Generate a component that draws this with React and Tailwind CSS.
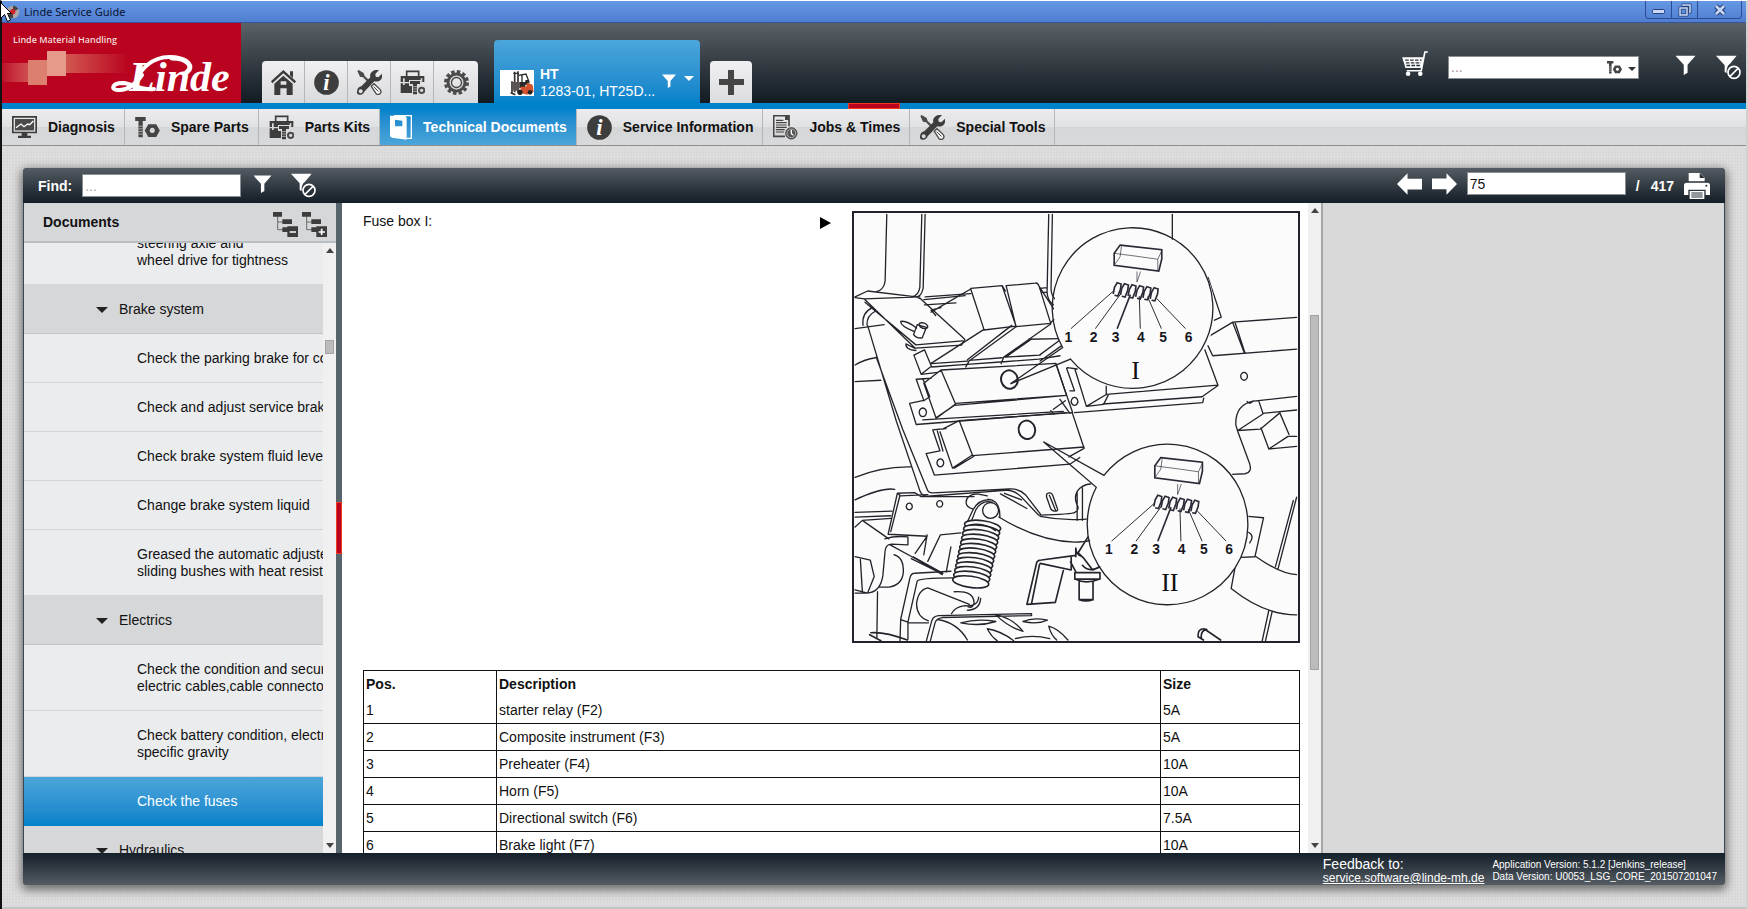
import React, { useState } from 'react'

const HomeIcon = () => (
  <svg viewBox="0 0 75 75" className="size-[25px]" fill="#3b3b3b" aria-hidden="true">
    <path d="M0 34 37 0l38 34-4 6L37 10 4 40z" />
    <path d="M57 4h9v20l-9-8z" />
    <path fillRule="evenodd" d="M10 41 37 17l28 24v34H47V55H28v20H10zM29 34v10h17V34z" />
  </svg>
)

const InfoIcon = () => (
  <svg viewBox="0 0 75 75" className="size-[25px]" aria-hidden="true">
    <circle cx="37.5" cy="37.5" r="37" fill="#3d3d3d" />
    <text x="37" y="59" textAnchor="middle" fontFamily="Liberation Serif, serif" fontStyle="italic" fontWeight="bold" fontSize="68" fill="#fff">i</text>
  </svg>
)

const ToolsIcon = () => (
  <svg viewBox="0 0 75 75" className="size-[25px]" aria-hidden="true">
    <path fill="#4a4a4a" d="M1 3 5 0l15 9 3 9 20 19-5 5-20-20-9-2z" />
    <path fill="#f1f1f1" stroke="#4a4a4a" strokeWidth="4" d="m43 49 8-8 18 17q6 8 0 13t-12 0z" />
    <path stroke="#4a4a4a" strokeWidth="3" d="m50 50 14 14" />
    <path fill="#3d3d3d" fillRule="evenodd" d="M66 0 55 12l1 8 8 2L75 11q3 14-7 21-8 4-16 2L23 64q-5 12-16 10T1 60q2-9 12-11l27-27q-3-10 5-17 9-7 21-5M11 58a6 6 0 1 0 .1 0" />
  </svg>
)

const ToolboxIcon = () => (
  <svg viewBox="0 0 75 75" className="size-[25px]" aria-hidden="true">
    <path fill="none" stroke="#3d3d3d" strokeWidth="5" d="M20 18V4h36v14" />
    <path fill="#3d3d3d" d="M2 18h71v18H2zM2 40h34v29H2z" />
    <path fill="#dcdcde" d="M9 25h5v20H9zM62 25h5v10h-5zM27 30h36v18H27z" />
    <path fill="#3d3d3d" d="M30 33h30v9H51v31H39V42h-9z" />
    <path stroke="#dcdcde" strokeWidth="2" d="M39 50h12M39 57h12M39 64h12" />
    <path fill="#dcdcde" d="M53 46h22v29H53z" />
    <circle cx="65" cy="61" r="8" fill="none" stroke="#4a4a4a" strokeWidth="6" />
  </svg>
)

const GearIcon = () => (
  <svg viewBox="0 0 75 75" className="size-[25px]" aria-hidden="true">
    <circle cx="37.5" cy="37.5" r="33" fill="none" stroke="#4a4a4a" strokeWidth="9" strokeDasharray="10.4 6.88" />
    <circle cx="37.5" cy="37.5" r="25" fill="none" stroke="#4a4a4a" strokeWidth="10" />
    <circle cx="37.5" cy="37.5" r="19" fill="none" stroke="#cfcfd1" strokeWidth="4" />
    <circle cx="37.5" cy="37.5" r="15" fill="none" stroke="#4a4a4a" strokeWidth="4" />
  </svg>
)

const MonitorIcon = () => (
  <svg viewBox="0 0 75 66" className="h-[22px] w-[25px]" aria-hidden="true">
    <path fill="#3d3d3d" fillRule="evenodd" d="M0 0h75v52H46v7h11v7H18v-7h11v-7H0zM5 5v42h65V5z" />
    <path fill="#4a4a4a" d="M9 9h57v34H9z" />
    <path fill="none" stroke="#fff" strokeWidth="4" d="m12 35 15-11 9 8 11-8 6 2 11-11" />
  </svg>
)

const BoltNutIcon = ({ className = 'h-[21px] w-[25px]' }) => (
  <svg viewBox="0 0 75 64" className={className} aria-hidden="true">
    <path fill="#444" d="M0 0h32v12H23v50H10V12H0z" />
    <path stroke="#ddd" strokeWidth="2" d="M10 28h13M10 36h13M10 44h13M10 52h13" />
    <path fill="#444" fillRule="evenodd" d="M40 22h24l11 19-11 20H40L29 41zm12 11a8 8 0 1 0 .1 0" />
  </svg>
)

const BookIcon = () => (
  <svg viewBox="0 0 66 75" className="h-[25px] w-[22px]" aria-hidden="true">
    <path fill="#fff" fillRule="evenodd" d="M0 2h44q6 2 6 8v64L6 68q-6-2-6-8zm15 12v20h22V17z" />
    <path fill="none" stroke="#fff" strokeWidth="4" d="M12 2h52v68H50" />
  </svg>
)

const JobsIcon = () => (
  <svg viewBox="0 0 75 75" className="size-[25px]" aria-hidden="true">
    <path fill="none" stroke="#444" strokeWidth="5" d="M48 34V2H2v62h34" />
    <path fill="#444" d="M36 2h12v13H36z" />
    <path stroke="#444" strokeWidth="3.5" d="M9 16h22M9 23h32M9 30h32M9 37h32M9 44h26M9 51h24" />
    <circle cx="55" cy="55" r="20" fill="#dcdcde" />
    <circle cx="55" cy="55" r="17" fill="#555" stroke="#444" strokeWidth="3" />
    <circle cx="55" cy="55" r="13" fill="none" stroke="#ddd" strokeWidth="2" />
    <path fill="none" stroke="#fff" strokeWidth="4" d="M55 45v11l6 5" />
  </svg>
)

const FunnelIcon = ({ className = 'h-[21px] w-[21px]' }) => (
  <svg viewBox="0 0 63 63" className={className} fill="#fff" aria-hidden="true">
    <path d="M0 2h63L38 31v25l-12 7V31z" />
  </svg>
)

const FunnelOffIcon = () => (
  <svg viewBox="0 0 75 75" className="size-[25px]" aria-hidden="true">
    <path fill="#fff" d="M0 2h62L42 26q-12 8-10 28L26 51V31z" />
    <circle cx="54" cy="52" r="18" fill="none" stroke="#fff" strokeWidth="5" />
    <path stroke="#fff" strokeWidth="5" d="m42 64 24-24" />
  </svg>
)

const CartIcon = () => (
  <svg viewBox="0 0 78 76" className="h-[25px] w-[26px]" aria-hidden="true">
    <path fill="none" stroke="#fff" strokeWidth="5" d="M78 3h-9L58 60H14" />
    <path fill="#fff" d="M0 19h66l-6 33H10z" />
    <path stroke="#27313a" strokeWidth="4" d="M9 28h50M11 36h46M13 44h42" strokeDasharray="11 4" />
    <circle cx="18" cy="69" r="7" fill="#fff" />
    <circle cx="55" cy="69" r="7" fill="#fff" />
  </svg>
)

const ArrowIcon = ({ flip }) => (
  <svg viewBox="0 0 76 66" className={`h-[22px] w-[25px] ${flip ? 'rotate-180' : ''}`} aria-hidden="true">
    <path fill="#fff" d="M0 33 32 0v17h44v33H32v16z" />
  </svg>
)

const PrinterIcon = () => (
  <svg viewBox="0 0 78 78" className="size-[26px]" aria-hidden="true">
    <path fill="#fff" d="M14 0h34l14 14v18H14z" />
    <path fill="#27313a" d="M47 0v15h15z" />
    <path fill="#27313a" d="M8 25h62v6H8z" />
    <path fill="#fff" d="M8 29h62q8 0 8 8v29H65V50H13v16H0V37q0-8 8-8" />
    <circle cx="67" cy="38" r="3" fill="#27313a" />
    <path fill="#fff" d="M17 54h44v24H17z" />
    <path stroke="#27313a" strokeWidth="3" d="M22 60h34M22 66h34M22 72h34" />
  </svg>
)

const TreeIcon = ({ plus }) => (
  <svg viewBox="0 0 75 75" className="size-[25px]" aria-hidden="true">
    <path fill="none" stroke="#6a6a6a" strokeWidth="3" d="M14 12v41h16M14 30h18" />
    <path fill="#3d3d3d" d="M0 0h27v14H0zM28 22h29v14H28zM28 46h16v14H28zM43 43h32v32H43z" />
    <path stroke="#fff" strokeWidth="5" d="M50 60h19" />
    {plus && <path stroke="#fff" strokeWidth="5" d="M59 50v19" />}
  </svg>
)

const Caret = ({ className = 'h-[6px] w-[12px] fill-[#222]', up }) => (
  <svg viewBox="0 0 12 6" className={className} preserveAspectRatio="none" aria-hidden="true">
    <path d={up ? 'M0 6 6 0l6 6z' : 'M0 0h12L6 6z'} />
  </svg>
)

const Forklift = () => (
  <svg viewBox="0 0 102 78" className="h-[26px] w-[34px] shrink-0 bg-white" aria-hidden="true">
    <path fill="none" stroke="#33302f" strokeWidth="5" d="M44 5v62M54 4v62M36 34v38M32 68l14 6" />
    <path fill="#5a5552" d="M36 36h22v26H36z" />
    <path fill="none" stroke="#2b2b2b" strokeWidth="4" d="M40 10h16M56 16l22-4 10 26M66 14v24" />
    <path fill="#2a2828" d="M58 36h18v18H58zM76 30h10v14H76z" />
    <path fill="#d4532f" d="M62 50h16l4-12 16 6 3 22-20 8-20-6z" />
    <circle cx="60" cy="67" r="8" fill="#222" />
    <circle cx="90" cy="67" r="7" fill="#222" />
  </svg>
)

const Logo = () => (
  <svg viewBox="0 0 239 80" className="h-20 w-[239px] shrink-0 bg-[#b9031f]" role="img" aria-label="Linde Material Handling">
    <defs>
      <linearGradient id="beamL"><stop stopColor="#e08d7e" stopOpacity=".1" /><stop offset="1" stopColor="#d9705f" /></linearGradient>
      <linearGradient id="beamR"><stop stopColor="#d9705f" /><stop offset="1" stopColor="#b9031f" /></linearGradient>
    </defs>
    <path fill="url(#beamL)" d="M0 40h45v19H0z" />
    <path fill="url(#beamR)" d="M45 31h82v19H45z" />
    <path fill="#dd7f6e" d="M26 37h19v25H26z" />
    <path fill="#e59a8a" d="M45 28h19v25H45z" />
    <text x="11" y="20" fontFamily="Open Sans, sans-serif" fontSize="9" fontWeight="600" fill="#f6dcd8">Linde Material Handling</text>
    <text y="68" fontFamily="Liberation Serif, serif" fontStyle="italic" fontWeight="bold" fill="#fff" fontSize="42">
      <tspan x="127">L</tspan><tspan x="153">inde</tspan>
    </text>
    <g fill="none" stroke="#fff" strokeLinecap="round">
      <path strokeWidth="4" d="M152 66c-12 2-20-5-31-6-12 0-13 8-3 7 10 0 17-8 22-15" />
      <path strokeWidth="4" d="M138 50c10-14 24-18 38-15" />
      <path strokeWidth="5" d="M170 35c16 0 22 9 15 14" />
    </g>
  </svg>
)

const FUSE_LABELS = ['1', '2', '3', '4', '5', '6']
const FUSE_LABEL_X = [-200, -123, -57, 20, 87, 164]

// fuse lens, drawn around its own centre; shift moves the contents sideways
const FuseLens = ({ cx, cy, shift = 0, numeral }) => (
  <g transform={`translate(${cx} ${cy})`}>
    <circle r="243" fill="#fbfbfb" />
    <g transform={`translate(${shift} 0)`}>
      <g fill="none" stroke="#2a2a36">
        <path strokeWidth="5" d="m-43-198 126 14v28l-9 37-135-18v-36z" />
        <path strokeWidth="2" d="M-61-173 8-164l63 9 12-26M-61-137l18-26 4-30M71-155v35M8-118 8-86M19-118 8-86" />
        {[-60, -38, -15, 8, 30, 52].map((x, i) => (
          <path key={x} strokeWidth="5" d={`M${x - 4} ${-50 + i * 3}l4-20 8-14 12 4-2 16-8 20-10-2`} />
        ))}
        <path strokeWidth="3" d="M-62-60-192 55M-43-48-118 55M15-44 18 55M40-42 82 55M68-36 155 55" />
        <path strokeWidth="5" d="M-12-48-52 55" />
      </g>
      <g fontFamily="Liberation Sans, Arial, sans-serif" fontWeight="bold" fontSize="42" fill="#16161c" textAnchor="middle">
        {FUSE_LABELS.map((n, i) => <text key={n} x={FUSE_LABEL_X[i]} y="94">{n}</text>)}
      </g>
    </g>
    <text x="4" y="206" textAnchor="middle" fontFamily="Liberation Serif, serif" fontSize="78" fill="#111">{numeral}</text>
  </g>
)

const Diagram = () => (
  <svg viewBox="37 30 1343 1295" className="h-[432px] w-[448px] shrink-0 border-2 border-[#22222e] bg-[#fbfbfb]" role="img" aria-label="Fuse boxes I and II">
    <g fill="none" stroke="#23232b" strokeWidth="4" strokeLinejoin="round" strokeLinecap="round">
      {/* pillars */}
      <path d="M136 34l-5 201q-3 27-26 33M242 34l-6 221q-4 25-24 29M252 34l-6 224q-6 24-19 26M626 34l-5 236q1 25 19 38M637 34l-4 226q1 20 12 30M1000 34v78M600 258l20-2M605 270h16M248 292l125-12M250 308l95-6M252 284l138-10" />
      {/* slotted bracket */}
      <path d="M40 284l38-18 147 18 14 6 133 122-10 18-140 9L68 290l-28-4M68 290l168-6M70 300l154 129 141-12M222 440l-28-14q-2 18 30 20M218 388q-40-16-40-30 18-4 48 20" />
      <path d="M228 368l-11 30q8 12 26 10l13-32zM242 362a14 8 20 1 0 .1 0M64 370q-4-38 26-52M76 368q0-28 24-40M40 380l88-12M40 490q30-18 62-22M40 540l78-4" />
      {/* relay blocks */}
      <path d="M270 330l120-70 40 122-160 103M390 258l95-8 42 122-97 12M485 250l10 16M497 250l88-8q8-2 12 10l35 112-105 10zM597 252l44 68M632 362l10-10M284 340l-14-16 30-8" />
      <path d="M527 374 385 478l-10 18M514 370 380 474M632 366 490 466l-8 20M565 412l95-2M570 414l-74 52 104-6M598 460l60-44M600 478l64-46M250 444l22 52 105-8M218 460l32-16M218 460l22 58 28-22M240 518l50-6M270 486l110-8M385 476l100-8M378 488l112-8M490 466l108-6M492 480l104-8M596 472l64-10" />
      {/* base plate */}
      <path d="M78 370 165 660l72 213q6 14 22 14l236-18q26-2 48 20l52 55q104-3 110-8 16-10 6-24-12-30 10-50 16-12 32-12M104 466l80 218 74 182q4 12 18 11l230-12q30-2 50 18l45 58M728 862v98M712 872v88" />
      <path d="M620 880q12-8 18 4l14 40q4 8-8 8-10 0-13-10l-12-34zM628 884l18 44" />
      {/* fuse box I */}
      <path d="M248 545l52-40 348-20 32 97-340 30-55 38zM300 505l44 103-54 40M344 606l334-24M270 530l-45 3 23 64-43 9 20 64 455-36M246 534l20 52-18 12M245 656l425-26M632 628l10 10M640 624l36-26" />
      <ellipse cx="507" cy="534" rx="25" ry="28" strokeWidth="6" transform="rotate(-15 507 534)" />
      <path d="M245 620a11 13 0 1 0 .1 0" />
      {/* centre fuse box */}
      <path d="M648 488l50 145M680 500l24 68h-14M682 498l30 4M706 505l34 110 60-36 338-28-40-108M740 615l52-6 14-28M790 608l300-22 48-34M1095 590l-3 14-388 30M704 588a10 12 0 1 0 .1 0M660 594l30 42M800 552v28" />
      {/* fuse box II */}
      <path d="M305 684l50-26 342-24 36 108-46 26M355 658l40 104-60 40-38-110M395 764l338-26M340 802l60-36M315 682l-40 4 22 64-42 8 25 65 410-33 30-20M288 686l18 64M298 774a10 12 0 1 0 .1 0" />
      <ellipse cx="560" cy="686" rx="25" ry="28" strokeWidth="6" transform="rotate(-15 560 686)" />
      {/* right side */}
      <path d="M1108 225l40 120-22 10M1108 405l75-45 193-14M1183 362l35 92M1190 362l30 92M1108 432l14 30 254-20" />
      <path d="M1217 512a10 12 0 1 0 .1 0M1376 585l-130 14q-56 10-54 72l6 20 36 98q8 26-14 30l-40 2M1226 600q10 12 18-2M1262 600l12 36 102-10M1274 638l-76 50M1198 688l68-4 60-50M1268 680l24 64 58-38 26 0M1292 744l84-8M1325 634l28 66" />
      {/* hoses and rail */}
      <path d="M40 830q80-34 170-32M40 898q80-38 120-32M40 936l112-4M40 950l108-4M480 880l80 44M492 878l52 20" />
      <path d="M168 878l-28 124 118 6-36 52M168 878l52-2 20 12 160 0M176 884l-28 110M168 878l10 8 82-4M204 908a9 10 0 1 0 .1 0M296 900a9 10 0 1 0 .1 0M298 1004l62-6M298 1004l-38 80M258 1004l-10 60" />
      {/* spring */}
      <path d="M410 880q-34 2-34 26 0 14 22 20M410 880l30 6M455 905q-32-8-50 24l-14 36M452 898q-40-4-58 36l-14 30M478 950q2-50-36-54" />
      <circle cx="450" cy="930" r="24" />
      {[0, 1, 2, 3, 4, 5, 6, 7, 8, 9, 10, 11, 12].map((i) => (
        <ellipse key={i} cx={426 - i * 3} cy={978 + i * 14} rx="55" ry="17" fill="#fbfbfb" strokeWidth="5" transform={`rotate(8 ${426 - i * 3} ${978 + i * 14})`} />
      ))}
      <path d="M475 950q120 74 230 76 30 0 50-6M600 948q70 14 140 8M385 975q40-12 80 16" />
      {/* left linkage */}
      <path d="M40 980l22-20 80 56M62 960l86-6M130 1016q30-10 70-6v24l-50-2q-20 0-20 30l-6 66q-8 50-48 52l-36 0M146 1034l84 46 74 44M158 1064q30 8 28 54-4 38-44 44l-28 0M108 1176l-2 140M40 1070l46 10 12 50-20 50-38-10M56 1078l6 96M216 1070l90 50M210 1076l94 46M330 1040l-14 76" />
      <path d="M206 1134q4-14 14-14l110-6M206 1134l-28 126 22 8 28-124q4-10 110-10M178 1262l-2 62M200 1270l62 0M200 1270v50M262 1264q-34-10-36-50 4-44 34-50l126 50M340 1176q60-4 60 34-2 16-18 12M414 1192q-2 30-42 26-30 4-40 24M420 1196q-2 34-40 36" />
      {/* tread plate */}
      <path d="M256 1324l16-60q4-14 20-16l282-6v6l-270 6q-18 2-22 16l-14 54M290 1260q60 10 90 62M360 1270q50-14 106-4-50 16-106 4M466 1246q52 10 82 50-46-14-82-50M548 1266q30-14 74-4-30 14-74 4M440 1288q40 6 80 36M626 1280q30 8 58 42M626 1280q6 26 24 42M525 1318q50-14 104 0M440 1288q14 26 30 36" />
      {/* clamp */}
      <path d="M590 1086q4-6 14-6l104-14M590 1086l-30 128 86-6 24-96M598 1094l-24 118M600 1090l94 20v-38M708 1044q0 20 20 26M708 1044v26M745 1010l-30 48 18 18 26 34 20-8M705 1118h76v20h-76zM708 1138q30 16 70 0M718 1146v54h42v-54M718 1200q20 8 42 0M692 1086l16 30M728 1096q20 24 52 4" strokeWidth="5" />
      <path d="M1230 948l46 4-26 118-42 2M1230 996q20 10 4 32M1250 1068q80 56 126 56M1376 890l-56 216M1366 900l-54 200M1192 1090l-14 76q100 80 198 80M1292 1232l-20 92M1302 1236l-20 88" />
      <path d="M1096 1288q-20 0-18 24l16 10M1104 1290q-20 4-16 28M1096 1288l50 34M88 1300q40-4 110 22M84 1306l34 18" strokeWidth="5" />
    </g>
    <FuseLens cx={885} cy={325} numeral="I" />
    <FuseLens cx={988} cy={968} shift={20} numeral="II" />
    <g fill="none" stroke="#23232b" strokeWidth="4">
      <path d="M668 437A243 243 0 1 1 692 472L510 547z" />
      <path d="M793 824A243 243 0 1 1 770 860L610 722z" />
    </g>
  </svg>
)

const APP_TABS = [
  { label: 'Home', icon: <HomeIcon /> },
  { label: 'Information', icon: <InfoIcon /> },
  { label: 'Tools', icon: <ToolsIcon /> },
  { label: 'Toolbox', icon: <ToolboxIcon /> },
  { label: 'Settings', icon: <GearIcon /> },
]

const NAV = [
  { label: 'Diagnosis', icon: <MonitorIcon /> },
  { label: 'Spare Parts', icon: <BoltNutIcon /> },
  { label: 'Parts Kits', icon: <ToolboxIcon /> },
  { label: 'Technical Documents', icon: <BookIcon /> },
  { label: 'Service Information', icon: <InfoIcon /> },
  { label: 'Jobs & Times', icon: <JobsIcon /> },
  { label: 'Special Tools', icon: <ToolsIcon /> },
]

const DOCS = [
  { lines: ['steering axle and', 'wheel drive for tightness'] },
  { group: 'Brake system' },
  { lines: ['Check the parking brake for correct operation'] },
  { lines: ['Check and adjust service brake'] },
  { lines: ['Check brake system fluid level'] },
  { lines: ['Change brake system liquid'] },
  { lines: ['Greased the automatic adjuster and', 'sliding bushes with heat resistant'] },
  { group: 'Electrics' },
  { lines: ['Check the condition and secure', 'electric cables,cable connectors'] },
  { lines: ['Check battery condition, electrolyte', 'specific gravity'] },
  { lines: ['Check the fuses'] },
  { group: 'Hydraulics' },
]

const FUSES = [
  ['1', 'starter relay (F2)', '5A'],
  ['2', 'Composite instrument (F3)', '5A'],
  ['3', 'Preheater (F4)', '10A'],
  ['4', 'Horn (F5)', '10A'],
  ['5', 'Directional switch (F6)', '7.5A'],
  ['6', 'Brake light (F7)', '10A'],
]

const TitleBar = () => (
  <div className="flex h-[22px] shrink-0 items-center border-b border-[#36549a] bg-gradient-to-b from-[#6698e4] to-[#4f7dd0] pl-1">
    <svg viewBox="0 0 42 42" className="size-3.5" aria-hidden="true">
      <circle cx="21" cy="21" r="19" fill="#a9a9a9" />
      <path fill="#444" d="M21 2a19 19 0 0 1 16 10L21 21zM21 40A19 19 0 0 1 5 30l16-9z" />
      <circle cx="20" cy="20" r="8" fill="#d0202a" />
    </svg>
    <span className="ml-1 font-['Noto_Sans',sans-serif] text-[11px] leading-4 text-[#0a1430]">Linde Service Guide</span>
    <div className="mr-1 ml-auto flex h-[18px] self-start rounded-b-sm border border-t-0 border-[#2c4c94]">
      <button aria-label="Minimize" className="grid w-[26px] place-items-center border-r border-[#2c4c94] pt-1">
        <svg viewBox="0 0 13 5" className="h-[5px] w-[13px]"><rect x=".5" y=".5" width="12" height="4" rx="1" fill="#c9d8f4" stroke="#27407c" /></svg>
      </button>
      <button aria-label="Restore" className="grid w-[26px] place-items-center border-r border-[#2c4c94]">
        <svg viewBox="0 0 14 14" className="size-3.5" fill="none">
          <path stroke="#27407c" strokeWidth="3" d="M5 4V2h7v7h-2M2 5h7v7H2z" />
          <path stroke="#c9d8f4" strokeWidth="1.5" d="M5 3V2h7v7h-1M2 5h7v7H2z" />
        </svg>
      </button>
      <button aria-label="Close" className="grid w-[43px] place-items-center">
        <svg viewBox="0 0 12 12" className="size-3" fill="none">
          <path stroke="#27407c" strokeWidth="5" d="m2 2 8 8m0-8-8 8" />
          <path stroke="#c9d8f4" strokeWidth="2.5" d="m2 2 8 8m0-8-8 8" />
        </svg>
      </button>
    </div>
  </div>
)

const Header = () => (
  <header className="flex h-20 shrink-0 items-end bg-gradient-to-b from-[#5a6167] to-[#131b22]">
    <Logo />
    <div className="ml-[21px] flex h-[42px] overflow-hidden rounded-t-sm">
      {APP_TABS.map(({ label, icon }) => (
        <button key={label} aria-label={label} className="grid w-[43px] place-items-center border-r border-[#b4b6b9] bg-gradient-to-b from-[#f0f0f2] to-[#d9dadc] last:w-11 last:border-r-0">
          {icon}
        </button>
      ))}
    </div>
    <button className="ml-4 flex h-[63px] w-[206px] items-end rounded-t-sm bg-gradient-to-b from-[#4ba6da] to-[#0082ca] px-1.5 pb-[7px] text-left text-sm text-white">
      <Forklift />
      <span className="-mb-1 ml-1.5 flex-1 leading-[17px] whitespace-nowrap">
        <b className="block">HT</b>
        1283-01, HT25D...
      </span>
      <span className="flex gap-2 pb-2">
        <FunnelIcon className="size-3.5" />
        <Caret className="mt-0.5 h-[5px] w-[10px] fill-white" />
      </span>
    </button>
    <button aria-label="Add tab" className="ml-2.5 grid h-[42px] w-[42px] place-items-center rounded-t-sm bg-gradient-to-b from-[#f0f0f2] to-[#dcdddf]">
      <svg viewBox="0 0 25 25" className="size-[25px]"><path fill="#464646" d="M9 0h6v9h10v6H15v10H9V15H0V9h9z" /></svg>
    </button>
    <div className="mr-[5px] ml-auto flex items-center gap-5 self-center pt-2">
      <button aria-label="Cart" className="-mt-2"><CartIcon /></button>
      <div className="flex h-[23px] w-[191px] items-center border border-[#8a8f94] bg-white">
        <input aria-label="Search" placeholder="..." className="w-0 flex-1 px-0.5 text-sm outline-none placeholder:text-[#a88f8f]" />
        <button aria-label="Search type" className="flex items-center gap-1.5 pr-0.5">
          <BoltNutIcon className="h-[13px] w-[15px]" />
          <Caret className="mt-1 h-1 w-2 fill-[#333]" />
        </button>
      </div>
      <div className="ml-4 flex items-start gap-5">
        <button aria-label="Filter"><FunnelIcon className="h-5 w-[21px]" /></button>
        <button aria-label="Clear filter"><FunnelOffIcon /></button>
      </div>
    </div>
  </header>
)

const NavBar = ({ active, onSelect }) => (
  <nav className="relative flex h-[43px] shrink-0 border-t-[6px] border-b border-t-[#0082ca] border-b-[#8e9092] bg-[linear-gradient(#ececee,#e0e1e3_50%,#d5d6d8_50%,#d8d9db)]">
    {NAV.map(({ label, icon }) => (
      <button
        key={label}
        onClick={() => onSelect(label)}
        className={`flex items-center gap-[11px] border-r border-[#b4b6b9] pr-[9px] pl-2.5 text-sm font-bold whitespace-nowrap ${label === active ? 'bg-gradient-to-b from-[#0082ca] to-[#4ba6da] text-white' : 'text-[#111]'}`}
      >
        {icon}
        {label}
      </button>
    ))}
    <span className="absolute -top-1.5 left-[846px] h-1.5 w-[52px] border border-[#f03a1e] bg-[#b9031f]" />
  </nav>
)

const ScrollBar = ({ children }) => (
  <div className="flex w-[13px] shrink-0 flex-col items-center bg-[#f0f0f1] py-[5px]">
    <Caret up className="h-[5px] w-2 shrink-0 fill-[#444]" />
    {children}
    <Caret className="mt-auto h-[5px] w-2 shrink-0 fill-[#444]" />
  </div>
)

const Sidebar = ({ selected, onSelect }) => (
  <aside className="flex w-[312px] shrink-0 flex-col bg-[#ebecee]">
    <div className="flex h-10 shrink-0 items-center border-b-2 border-[#b9bec3] bg-[#d6d7d9] pr-[9px] pl-[19px]">
      <h2 className="text-sm font-bold">Documents</h2>
      <button aria-label="Collapse all" className="ml-auto pt-1"><TreeIcon /></button>
      <button aria-label="Expand all" className="ml-1 pt-1"><TreeIcon plus /></button>
    </div>
    <div className="flex min-h-0 flex-1">
      <ul className="flex w-0 flex-1 flex-col overflow-hidden text-sm leading-[17px] whitespace-nowrap">
        {DOCS.map(({ group, lines }) => {
          const key = group || lines[0]
          const rowBg = group
            ? 'bg-[#d6d7d9] border-[#c3c5c8] pl-[72px]'
            : key === selected
              ? 'bg-gradient-to-b from-[#4ba6da] to-[#0082ca] border-[#0082ca] pl-[113px] text-white'
              : 'border-[#d3d4d7] pl-[113px]'
          return (
            <li key={key} className="shrink-0 first:-mt-6">
              <button onClick={() => !group && onSelect(key)} className={`flex w-full items-center overflow-hidden border-b py-[15px] pt-4 text-left ${rowBg}`}>
                {group && <Caret className="mr-[11px] h-[6px] w-[12px] fill-[#222]" />}
                <span>{group || lines.map(l => <span key={l} className="block">{l}</span>)}</span>
              </button>
            </li>
          )
        })}
      </ul>
      <ScrollBar><span className="mt-[87px] h-3.5 w-[9px] border border-[#a2a2a2] bg-[#bcbcbc]" /></ScrollBar>
    </div>
  </aside>
)

const DocumentPage = () => (
  <main className="min-w-0 flex-1 overflow-hidden bg-white pt-2 pr-2 pl-[21px] text-sm">
    <div className="flex items-start">
      <p>Fuse box I:</p>
      <svg viewBox="0 0 11 12" className="mt-1.5 mr-[21px] ml-auto h-3 w-[11px]" aria-hidden="true"><path d="M0 0v12l11-6z" /></svg>
      <Diagram />
    </div>
    <table className="mt-[27px] w-full table-fixed border-collapse border border-[#111] leading-4">
      <colgroup>
        <col className="w-[133px]" />
        <col />
        <col className="w-[139px]" />
      </colgroup>
      <thead>
        <tr className="h-[26px] text-left">
          {['Pos.', 'Description', 'Size'].map(h => <th key={h} className="border-x border-[#111] px-0.5">{h}</th>)}
        </tr>
      </thead>
      <tbody>
        {FUSES.map(row => (
          <tr key={row[0]} className="h-[27px]">
            {row.map((cell, i) => <td key={i} className="border-x border-b border-[#111] px-0.5">{cell}</td>)}
          </tr>
        ))}
      </tbody>
    </table>
  </main>
)

// classic arrow pointer resting in the window corner
const Pointer = () => (
  <svg viewBox="0 0 12 20" className="pointer-events-none absolute top-0.5 left-0 h-5 w-3" aria-hidden="true">
    <path d="M.5.5v16l4-4 3 7 3-1.500-3-6.500h4z" fill="#fff" stroke="#000" />
  </svg>
)

export default function App() {
  const [tab, setTab] = useState('Technical Documents')
  const [doc, setDoc] = useState('Check the fuses')
  const [page, setPage] = useState('75')

  return (
    <div className="flex h-screen flex-col overflow-hidden border-t border-r-2 border-l-2 border-t-white border-r-[#d0d0d0] border-l-[#111] bg-[#dbdbdb] font-['Liberation_Sans',Arial,sans-serif] text-[#111]">
      <TitleBar />
      <Header />
      <NavBar active={tab} onSelect={setTab} />
      <div className="flex min-h-0 flex-1 flex-col border-b-2 border-[#c4c4c4] bg-[repeating-linear-gradient(90deg,rgba(255,255,255,.12)_0_1px,transparent_1px_3px),repeating-linear-gradient(rgba(0,0,0,.02)_0_1px,transparent_1px_3px)] px-[21px] pt-[22px] pb-[22px]">
        <section className="flex min-h-0 flex-1 flex-col overflow-hidden rounded-sm bg-[#3c464e] shadow-[0_3px_10px_2px_rgba(0,0,0,.5)]">
          <div className="flex h-[35px] shrink-0 items-center bg-gradient-to-b from-[#555c63] to-[#141e26] pr-[15px] pl-[15px] text-sm font-bold text-white">
            <label htmlFor="find">Find:</label>
            <input id="find" placeholder="..." className="ml-2.5 h-[23px] w-[159px] border border-[#8a8f94] bg-white px-0.5 font-normal text-[#111] outline-none placeholder:text-[#aaa]" />
            <button aria-label="Filter documents" className="ml-3 pb-1"><FunnelIcon className="h-[18px] w-[19px]" /></button>
            <button aria-label="Clear document filter" className="ml-[19px]"><FunnelOffIcon /></button>
            <button aria-label="Previous page" className="ml-auto pb-1"><ArrowIcon /></button>
            <button aria-label="Next page" className="ml-2.5 pb-1"><ArrowIcon flip /></button>
            <input aria-label="Page" value={page} onChange={e => setPage(e.target.value)} className="mb-1 ml-2.5 h-[23px] w-[159px] border border-[#8a8f94] bg-white px-0.5 font-normal text-[#111] outline-none" />
            <span className="ml-2.5">/</span>
            <span className="ml-[11px]">417</span>
            <button aria-label="Print" className="ml-2.5"><PrinterIcon /></button>
          </div>
          <div className="flex min-h-0 flex-1 px-px">
            <Sidebar selected={doc} onSelect={setDoc} />
            <div className="flex w-1.5 shrink-0 items-center bg-[#58646b]">
              <span className="h-[52px] w-full border border-[#f03a1e] bg-[#b9031f]" />
            </div>
            <DocumentPage />
            <ScrollBar><span className="mt-[102px] h-[355px] w-[9px] border border-[#a2a2a2] bg-[#bcbcbc]" /></ScrollBar>
            <div className="w-[403px] shrink-0 border-l-2 border-[#a5a5a5] bg-[#d9d9d9]" />
          </div>
          <footer className="flex h-8 shrink-0 items-center justify-end gap-2 bg-gradient-to-b from-[#15202a] to-[#555c63] pt-1 pr-2 whitespace-nowrap text-white">
            <div className="text-xs leading-[14px]">
              <p className="text-sm leading-[14px]">Feedback to:</p>
              <a href="mailto:service.software@linde-mh.de" className="underline">service.software@linde-mh.de</a>
            </div>
            <div className="text-[10px] leading-3">
              <p>Application Version: 5.1.2 [Jenkins_release]</p>
              <p>Data Version: U0053_LSG_CORE_201507201047</p>
            </div>
          </footer>
        </section>
      </div>
      <Pointer />
    </div>
  )
}
